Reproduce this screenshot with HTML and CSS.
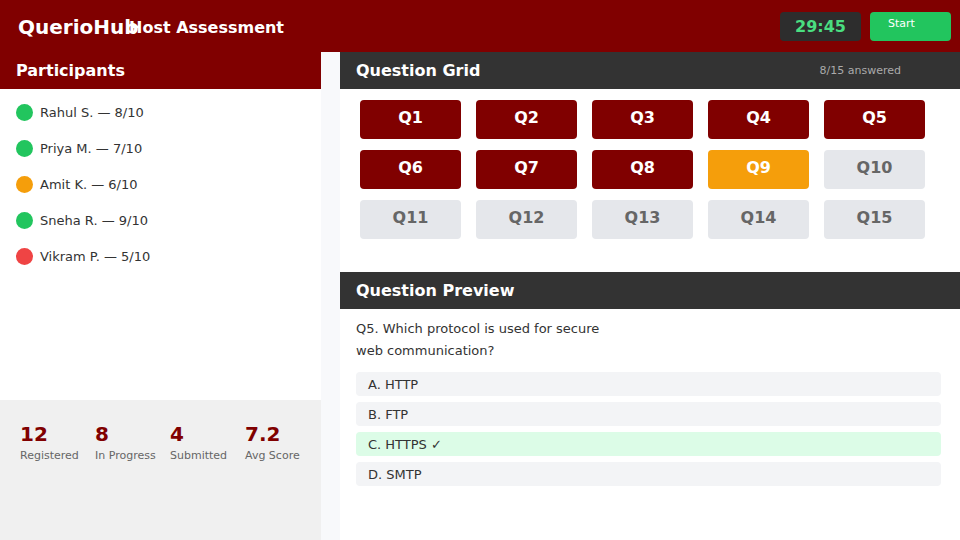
FILE: index.html
```html
<!DOCTYPE html>
<html>
<head>
<meta charset="utf-8">
<link rel="stylesheet" href="styles.css">
</head>
<body>
<header class="topbar">
  <div class="logo">QuerioHub</div>
  <div class="title">Host Assessment</div>
  <div class="spacer"></div>
  <div class="timer">29:45</div>
  <button class="start">Start</button>
</header>
<div class="layout">
  <aside class="sidebar">
    <div class="side-head">Participants</div>
    <ul class="people">
      <li><span class="dot green"></span>Rahul S. — 8/10</li>
      <li><span class="dot green"></span>Priya M. — 7/10</li>
      <li><span class="dot orange"></span>Amit K. — 6/10</li>
      <li><span class="dot green"></span>Sneha R. — 9/10</li>
      <li><span class="dot red"></span>Vikram P. — 5/10</li>
    </ul>
    <div class="stats">
      <div class="stat"><div class="num">12</div><div class="lbl">Registered</div></div>
      <div class="stat"><div class="num">8</div><div class="lbl">In Progress</div></div>
      <div class="stat"><div class="num">4</div><div class="lbl">Submitted</div></div>
      <div class="stat"><div class="num">7.2</div><div class="lbl">Avg Score</div></div>
    </div>
  </aside>
  <div class="gutter"></div>
  <main class="main">
    <div class="sec-head grid-head"><span>Question Grid</span><span class="answered">8/15 answered</span></div>
    <div class="qgrid">
      <div class="q done">Q1</div>
      <div class="q done">Q2</div>
      <div class="q done">Q3</div>
      <div class="q done">Q4</div>
      <div class="q done">Q5</div>
      <div class="q done">Q6</div>
      <div class="q done">Q7</div>
      <div class="q done">Q8</div>
      <div class="q current">Q9</div>
      <div class="q">Q10</div>
      <div class="q">Q11</div>
      <div class="q">Q12</div>
      <div class="q">Q13</div>
      <div class="q">Q14</div>
      <div class="q">Q15</div>
    </div>
    <div class="sec-head">Question Preview</div>
    <div class="preview">
      <p class="qtext">Q5. Which protocol is used for secure web communication?</p>
      <div class="opts">
        <div class="opt">A. HTTP</div>
        <div class="opt">B. FTP</div>
        <div class="opt correct">C. HTTPS ✓</div>
        <div class="opt">D. SMTP</div>
      </div>
    </div>
  </main>
</div>
</body>
</html>
```
FILE: styles.css
```css
* { box-sizing: border-box; }
html, body { margin: 0; padding: 0; }
body {
  width: 960px;
  height: 540px;
  overflow: hidden;
  font-family: "DejaVu Sans", Verdana, sans-serif;
  color: #333;
  background: #fff;
}
.topbar {
  height: 52px;
  background: #800000;
  display: flex;
  align-items: center;
  padding: 0 9px 0 18px;
  color: #fff;
}
.logo {
  width: 111px;
  flex: none;
  white-space: nowrap;
  font-size: 20px;
  font-weight: bold;
  margin-top: 2px;
}
.title {
  font-size: 16px;
  font-weight: bold;
  white-space: nowrap;
  margin-top: 2px;
}
.spacer { flex: 1; }
.timer {
  width: 81px;
  height: 29px;
  background: #2d2d2d;
  border-radius: 4px;
  color: #4ade80;
  font-size: 16px;
  font-weight: bold;
  display: flex;
  align-items: center;
  justify-content: center;
}
.start {
  margin-left: 9px;
  width: 81px;
  height: 29px;
  background: #22c55e;
  border: none;
  border-radius: 4px;
  color: #fff;
  font-family: "DejaVu Sans", sans-serif;
  font-size: 11px;
  text-align: left;
  padding: 0 18px;
  line-height: 23px;
  display: flex;
  align-items: flex-start;
}
.layout {
  display: flex;
  height: 488px;
}
.sidebar {
  width: 321px;
  flex: none;
  display: flex;
  flex-direction: column;
  background: #fff;
}
.side-head {
  height: 37px;
  background: #800000;
  color: #fff;
  font-size: 16px;
  font-weight: bold;
  padding-left: 16px;
  display: flex;
  align-items: center;
}
.people {
  list-style: none;
  margin: 0;
  padding: 5px 16px;
  flex: 1;
}
.people li {
  height: 36px;
  display: flex;
  align-items: center;
  gap: 7px;
  font-size: 13px;
  color: #333;
}
.dot {
  width: 17px;
  height: 17px;
  border-radius: 50%;
  flex: none;
}
.green { background: #22c55e; }
.orange { background: #f59e0b; }
.red { background: #ef4444; }
.stats {
  height: 140px;
  background: #f0f0f0;
  display: grid;
  grid-template-columns: repeat(4, 75px);
  align-content: start;
  padding: 22px 20px 0;
}
.num {
  font-size: 20px;
  font-weight: bold;
  color: #800000;
  line-height: 24px;
}
.lbl {
  margin-top: 3px;
  font-size: 11px;
  line-height: 13px;
  color: #666;
}
.gutter {
  width: 19px;
  flex: none;
  background: #f8f9fb;
}
.main {
  flex: 1;
  background: #fff;
}
.sec-head {
  height: 37px;
  background: #333;
  color: #fff;
  font-size: 16px;
  font-weight: bold;
  padding-left: 16px;
  display: flex;
  align-items: center;
}
.grid-head {
  justify-content: space-between;
  padding-right: 59px;
}
.answered {
  font-size: 11px;
  font-weight: normal;
  color: #aaa;
}
.qgrid {
  height: 183px;
  display: grid;
  grid-template-columns: repeat(5, 101px);
  grid-auto-rows: 39px;
  column-gap: 15px;
  row-gap: 11px;
  padding: 11px 20px 0;
  align-content: start;
}
.q {
  background: #e5e7eb;
  color: #666;
  border-radius: 4px;
  font-size: 16px;
  font-weight: bold;
  display: flex;
  align-items: center;
  justify-content: center;
  padding-bottom: 4px;
}
.q.done { background: #800000; color: #fff; }
.q.current { background: #f59e0b; color: #fff; }
.preview {
  padding: 9px 19px 0 16px;
}
.qtext {
  margin: 0 0 10px;
  max-width: 260px;
  font-size: 13px;
  line-height: 22px;
  color: #333;
}
.opts {
  display: flex;
  flex-direction: column;
  gap: 6px;
}
.opt {
  height: 24px;
  background: #f3f4f6;
  border-radius: 4px;
  padding-left: 12px;
  font-size: 13px;
  display: flex;
  align-items: center;
  color: #333;
}
.opt.correct { background: #dcfce7; }
```
